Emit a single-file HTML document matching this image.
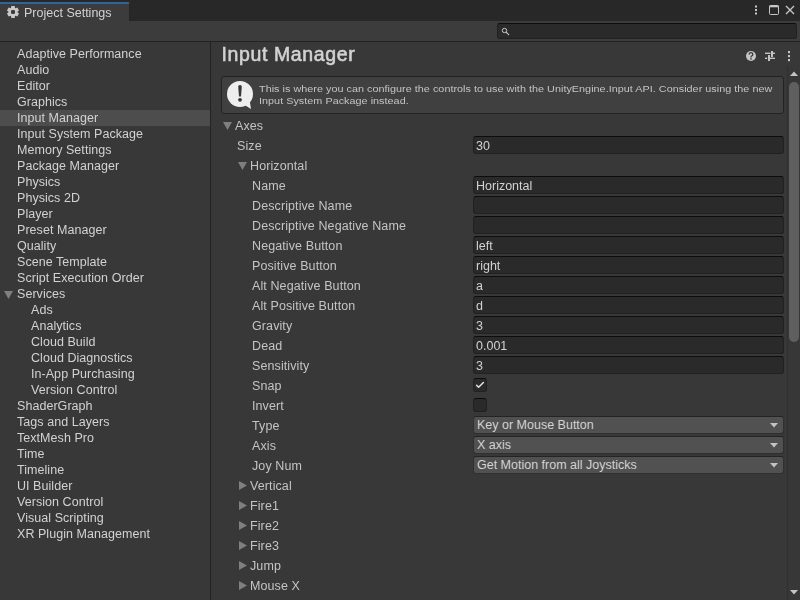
<!DOCTYPE html>
<html><head><meta charset="utf-8">
<style>
*{margin:0;padding:0;box-sizing:border-box}
html,body{width:800px;height:600px;overflow:hidden;background:#383838;font-family:"Liberation Sans",sans-serif;color:#c4c4c4;font-size:12.5px}
.abs{position:absolute}
#tabbar{left:0;top:0;width:800px;height:21px;background:#282828}
#tab{left:0;top:2px;width:130px;height:19px;background:#3c3c3c;border-top:2px solid #2e6699;border-right:1px solid #262626;border-top-right-radius:2px}
#tabtxt{left:24px;top:5px;font-size:12.5px;color:#d2d2d2;line-height:16px;white-space:nowrap}
#toolbar{left:0;top:21px;width:800px;height:20px;background:#3c3c3c}
#tbline{left:0;top:41px;width:800px;height:1px;background:#232323}
#search{left:497px;top:23px;width:300px;height:16px;background:#2a2a2a;border:1px solid #212121;border-top-color:#0d0d0d;border-radius:3px}
#leftp{left:0;top:42px;width:210px;height:558px;background:#383838}
#split{left:210px;top:42px;width:1px;height:558px;background:#232323}
.li{position:absolute;left:0;width:210px;height:16px;line-height:16px;padding-left:17px;white-space:nowrap;color:#d2d2d2;letter-spacing:0.05px}
.li.sub{padding-left:31px}
.li.sel{background:#4d4d4d}
#title{left:221.5px;top:42px;font-size:19.5px;font-weight:normal;-webkit-text-stroke:0.6px #d2d2d2;letter-spacing:0.62px;line-height:24px;color:#d2d2d2;white-space:nowrap}
#help{left:221px;top:76px;width:563px;height:38px;background:#404040;border:1px solid #232323;border-radius:3px}
#helptxt{left:259px;top:83.2px;font-size:10.8px;line-height:13.75px;color:#c4c4c4;white-space:nowrap;letter-spacing:0.03px;transform:scaleY(0.873);transform-origin:0 0}
.row{position:absolute;height:18px;line-height:20px;white-space:nowrap;color:#c4c4c4;letter-spacing:0.1px}
.fld{position:absolute;left:473px;width:311px;height:18px;background:#2a2a2a;border:1px solid #212121;border-top-color:#0d0d0d;border-radius:3px;line-height:18px;padding-left:2px;color:#d2d2d2;white-space:nowrap}
.dd{position:absolute;left:473px;width:311px;height:18px;background:#515151;border:1px solid #303030;border-top-color:#242424;border-radius:3px;line-height:17px;padding-left:3px;color:#d2d2d2;white-space:nowrap}
.chk{position:absolute;left:473px;width:14px;height:14px;background:#2a2a2a;border:1px solid #212121;border-top-color:#0d0d0d;border-radius:3px}
#sb{left:787px;top:66px;width:13px;height:534px;background:#373737;border-left:1px solid #303030}
#thumb{left:789px;top:82px;width:10px;height:260px;background:#5f5f5f;border-radius:5px}
</style></head><body>
<div id="wrap" style="position:absolute;left:0;top:0;width:800px;height:600px;filter:grayscale(1)">
<div id="tabbar" class="abs"></div>
<div id="tab" class="abs"></div>
<div id="tabtxt" class="abs">Project Settings</div>
<div id="toolbar" class="abs"></div>
<div id="tbline" class="abs"></div>
<div id="search" class="abs"></div>
<div id="leftp" class="abs"></div>
<div id="split" class="abs"></div>

<div class="li" style="top:46px">Adaptive Performance</div>
<div class="li" style="top:62px">Audio</div>
<div class="li" style="top:78px">Editor</div>
<div class="li" style="top:94px">Graphics</div>
<div class="li sel" style="top:110px">Input Manager</div>
<div class="li" style="top:126px">Input System Package</div>
<div class="li" style="top:142px">Memory Settings</div>
<div class="li" style="top:158px">Package Manager</div>
<div class="li" style="top:174px">Physics</div>
<div class="li" style="top:190px">Physics 2D</div>
<div class="li" style="top:206px">Player</div>
<div class="li" style="top:222px">Preset Manager</div>
<div class="li" style="top:238px">Quality</div>
<div class="li" style="top:254px">Scene Template</div>
<div class="li" style="top:270px">Script Execution Order</div>
<div class="li" style="top:286px">Services</div>
<div class="li sub" style="top:302px">Ads</div>
<div class="li sub" style="top:318px">Analytics</div>
<div class="li sub" style="top:334px">Cloud Build</div>
<div class="li sub" style="top:350px">Cloud Diagnostics</div>
<div class="li sub" style="top:366px">In-App Purchasing</div>
<div class="li sub" style="top:382px">Version Control</div>
<div class="li" style="top:398px">ShaderGraph</div>
<div class="li" style="top:414px">Tags and Layers</div>
<div class="li" style="top:430px">TextMesh Pro</div>
<div class="li" style="top:446px">Time</div>
<div class="li" style="top:462px">Timeline</div>
<div class="li" style="top:478px">UI Builder</div>
<div class="li" style="top:494px">Version Control</div>
<div class="li" style="top:510px">Visual Scripting</div>
<div class="li" style="top:526px">XR Plugin Management</div>

<div id="title" class="abs">Input Manager</div>
<div id="help" class="abs"></div>
<div id="helptxt" class="abs">This is where you can configure the controls to use with the UnityEngine.Input API. Consider using the new<br>Input System Package instead.</div>

<div class="row" style="left:235px;top:116px">Axes</div>
<div class="row" style="left:237px;top:136px">Size</div>
<div class="fld" style="top:136px">30</div>
<div class="row" style="left:250px;top:156px">Horizontal</div>
<div class="row" style="left:252px;top:176px">Name</div><div class="fld" style="top:176px">Horizontal</div>
<div class="row" style="left:252px;top:196px">Descriptive Name</div><div class="fld" style="top:196px"></div>
<div class="row" style="left:252px;top:216px">Descriptive Negative Name</div><div class="fld" style="top:216px"></div>
<div class="row" style="left:252px;top:236px">Negative Button</div><div class="fld" style="top:236px">left</div>
<div class="row" style="left:252px;top:256px">Positive Button</div><div class="fld" style="top:256px">right</div>
<div class="row" style="left:252px;top:276px">Alt Negative Button</div><div class="fld" style="top:276px">a</div>
<div class="row" style="left:252px;top:296px">Alt Positive Button</div><div class="fld" style="top:296px">d</div>
<div class="row" style="left:252px;top:316px">Gravity</div><div class="fld" style="top:316px">3</div>
<div class="row" style="left:252px;top:336px">Dead</div><div class="fld" style="top:336px">0.001</div>
<div class="row" style="left:252px;top:356px">Sensitivity</div><div class="fld" style="top:356px">3</div>
<div class="row" style="left:252px;top:376px">Snap</div><div class="chk" style="top:378px"></div>
<div class="row" style="left:252px;top:396px">Invert</div><div class="chk" style="top:398px"></div>
<div class="row" style="left:252px;top:416px">Type</div><div class="dd" style="top:416px">Key or Mouse Button</div>
<div class="row" style="left:252px;top:436px">Axis</div><div class="dd" style="top:436px">X axis</div>
<div class="row" style="left:252px;top:456px">Joy Num</div><div class="dd" style="top:456px">Get Motion from all Joysticks</div>
<div class="row" style="left:250px;top:476px">Vertical</div>
<div class="row" style="left:250px;top:496px">Fire1</div>
<div class="row" style="left:250px;top:516px">Fire2</div>
<div class="row" style="left:250px;top:536px">Fire3</div>
<div class="row" style="left:250px;top:556px">Jump</div>
<div class="row" style="left:250px;top:576px">Mouse X</div>

<div id="sb" class="abs"></div>
<div id="thumb" class="abs"></div>

<svg class="abs" style="left:0;top:0" width="800" height="600" viewBox="0 0 800 600">
 <!-- gear -->
 <g fill="#cacaca" transform="translate(13,12)">
  <circle r="4.3"/>
  <path id="tooth" d="M-2.1 -3.2 L-1.7 -6 L1.7 -6 L2.1 -3.2 Z"/>
  <use href="#tooth" transform="rotate(60)"/>
  <use href="#tooth" transform="rotate(120)"/>
  <use href="#tooth" transform="rotate(180)"/>
  <use href="#tooth" transform="rotate(240)"/>
  <use href="#tooth" transform="rotate(300)"/>
  <rect x="-2" y="-2" width="4" height="4" rx="1.3" fill="#3c3c3c"/>
 </g>
 <!-- top right: dots -->
 <g fill="#c8c8c8">
  <rect x="755" y="5.5" width="2" height="2"/>
  <rect x="755" y="9" width="2" height="2"/>
  <rect x="755" y="12.5" width="2" height="2"/>
 </g>
 <!-- maximize -->
 <rect x="769.5" y="5.5" width="9" height="9" rx="1" fill="none" stroke="#c8c8c8" stroke-width="1"/>
 <rect x="769.5" y="5.5" width="9" height="1.8" fill="#c8c8c8"/>
 <!-- close -->
 <path d="M786 6 L794 14 M794 6 L786 14" stroke="#c8c8c8" stroke-width="1.3" fill="none"/>
 <!-- search icon -->
 <circle cx="504.5" cy="30.5" r="2.2" fill="none" stroke="#c8c8c8" stroke-width="1"/>
 <path d="M506.3 32.3 L508.7 34.7" stroke="#c8c8c8" stroke-width="1.1" stroke-linecap="round"/>
 <!-- help icon -->
 <circle cx="751" cy="56" r="5" fill="#c4c4c4"/>
 <path d="M749.2 54.6 Q749.2 52.6 751 52.6 Q752.8 52.6 752.8 54.4 Q752.8 55.4 751.6 56 Q751 56.3 751 57.4" stroke="#383838" stroke-width="1.3" fill="none"/>
 <rect x="750.3" y="58.2" width="1.4" height="1.4" fill="#383838"/>
 <!-- sliders icon -->
 <g fill="#c4c4c4">
  <rect x="765" y="52.6" width="5.5" height="1.4"/>
  <rect x="771" y="51" width="2" height="6"/>
  <rect x="773" y="52.6" width="2" height="1.4"/>
  <rect x="765" y="57.6" width="2.2" height="1.4"/>
  <rect x="768" y="55" width="2" height="6"/>
  <rect x="770" y="57.6" width="5" height="1.4"/>
 </g>
 <!-- kebab -->
 <g fill="#c4c4c4">
  <rect x="788" y="51" width="2" height="2.2"/>
  <rect x="788" y="55" width="2" height="2.2"/>
  <rect x="788" y="59" width="2" height="2.2"/>
 </g>
 <!-- help bubble -->
 <circle cx="240" cy="94" r="13" fill="#eeeeee"/>
 <path d="M243 104 L251 109 L249.6 100 Z" fill="#eeeeee"/>
 <path d="M238.2 86.8 Q238.2 85 240 85 Q241.8 85 241.8 86.8 L241 96.6 L239 96.6 Z" fill="#383838"/>
 <circle cx="240" cy="99.8" r="1.9" fill="#383838"/>
 <!-- foldout triangles -->
 <g fill="#7f7f7f">
  <path d="M4 291 L13 291 L8.5 299 Z"/>
  <path d="M223 122 L232 122 L227.5 130 Z"/>
  <path d="M238 162 L247 162 L242.5 170 Z"/>
  <path d="M239 481 L247 485.5 L239 490 Z"/>
  <path d="M239 501 L247 505.5 L239 510 Z"/>
  <path d="M239 521 L247 525.5 L239 530 Z"/>
  <path d="M239 541 L247 545.5 L239 550 Z"/>
  <path d="M239 561 L247 565.5 L239 570 Z"/>
  <path d="M239 581 L247 585.5 L239 590 Z"/>
 </g>
 <!-- checkmark -->
 <path d="M476.6 385.2 L478.6 387.3 L483.4 382.5" stroke="#e4e4e4" stroke-width="1.5" fill="none" stroke-linecap="round" stroke-linejoin="round"/>
 <!-- dropdown arrows -->
 <g fill="#c4c4c4">
  <path d="M770 423 L778 423 L774 427.5 Z"/>
  <path d="M770 443 L778 443 L774 447.5 Z"/>
  <path d="M770 463 L778 463 L774 467.5 Z"/>
 </g>
 <!-- scroll arrows -->
 <path d="M790 76 L798 76 L794 71.5 Z" fill="#c4c4c4"/>
 <path d="M790 590 L798 590 L794 594.5 Z" fill="#c4c4c4"/>
</svg>
</div>
<div class="abs" style="left:0;top:2px;width:129px;height:2px;background:#2e6699;border-top-right-radius:2px"></div>
</body></html>
